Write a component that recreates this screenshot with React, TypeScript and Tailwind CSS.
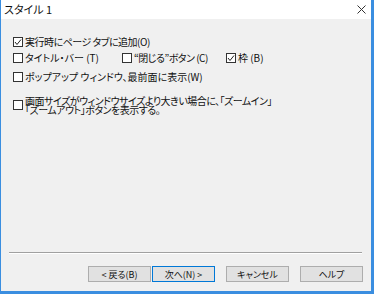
import React from "react";

const font = "[font-family:'Noto_Sans_CJK_JP','Noto_Sans',sans-serif] [font-feature-settings:'palt']";

function Box({ checked }: { checked?: boolean }) {
  return (
    <span className="shrink-0 w-[10px] h-[10px] border border-[#333] bg-white flex items-center justify-center">
      {checked && (
        <svg width="8" height="8" viewBox="0 0 8 8">
          <polyline points="1,4 3,6.5 7,1.5" fill="none" stroke="#222" strokeWidth="1" />
        </svg>
      )}
    </span>
  );
}

function Check({ label, checked, tight }: { label: string; checked?: boolean; tight?: boolean }) {
  return (
    <div className="flex items-center gap-[2px]">
      <Box checked={checked} />
      <span className={"text-[10px] leading-[12px] text-[#111] whitespace-nowrap " + (tight ? "tracking-[-0.5px]" : "")}>
        {label}
      </span>
    </div>
  );
}

function Btn({ label, primary }: { label: string; primary?: boolean }) {
  return (
    <button
      type="button"
      className={
        "w-[63px] h-[16px] flex items-center justify-center text-[9px] leading-none text-[#111] bg-[#e1e1e1] border " +
        (primary ? "border-[#0078d7]" : "border-[#adadad]")
      }
    >
      {label}
    </button>
  );
}

export default function App() {
  return (
    <div className={"w-[374px] h-[294px] flex flex-col border-l border-r-[3px] border-b-[3px] border-[#3a8ee0] bg-[#f0f0f0] " + font}>
      <div className="h-[19px] bg-white flex items-center justify-between pl-[3px] pr-[5px]">
        <span className="text-[11px] leading-none text-[#111]">スタイル 1</span>
        <svg width="9" height="9" viewBox="0 0 9 9">
          <path d="M0.5 0.5 L8.5 8.5 M8.5 0.5 L0.5 8.5" stroke="#333" strokeWidth="1" />
        </svg>
      </div>

      <div className="flex-1 flex flex-col pl-[12px]">
        <div className="mt-[17px]">
          <Check label="実行時にページ タブに追加(O)" checked tight />
        </div>
        <div className="mt-[4px] flex items-center">
          <div className="w-[109px]">
            <Check label="タイトル・バー (T)" />
          </div>
          <div className="w-[104px]">
            <Check label="“閉じる”ボタン (C)" tight />
          </div>
          <Check label="枠 (B)" checked />
        </div>
        <div className="mt-[7px]">
          <Check label="ポップアップ ウィンドウ、最前面に表示(W)" />
        </div>
        <div className="mt-[13px] flex items-center gap-[2px]">
          <Box />
          <span className="text-[10px] leading-[9px] text-[#111] tracking-[-0.5px]">
            画面サイズがウィンドウサイズより大きい場合に、「ズームイン」
            <br />
            「ズームアウト」ボタンを表示する。
          </span>
        </div>
      </div>

      <div className="ml-[8px] mr-[9px] border-t border-[#a0a0a0] border-b border-b-white" />

      <div className="h-[37px] flex justify-end items-start pt-[12px] pr-[8px]">
        <div className="flex gap-[1px]">
          <Btn label="< 戻る(B)" />
          <Btn label="次へ(N) >" primary />
        </div>
        <div className="ml-[11px]">
          <Btn label="キャンセル" />
        </div>
        <div className="ml-[11px]">
          <Btn label="ヘルプ" />
        </div>
      </div>
    </div>
  );
}
